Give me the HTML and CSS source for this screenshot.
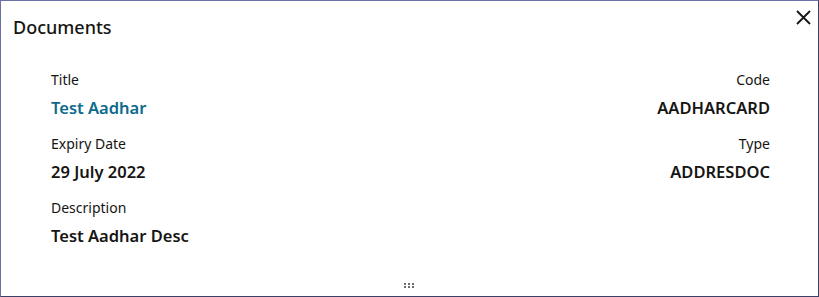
FILE: index.html
```html
<!DOCTYPE html>
<html lang="en">

<head>
    <meta charset="UTF-8">
    <title>Documents</title>
    <link rel="stylesheet" href="styles.css">
</head>

<body>

    <div class="dialog">
        <div class="dialog-header">
            <h2 class="dialog-title">Documents</h2>
            <button class="close-btn" aria-label="Close">
                <svg width="15" height="15" viewBox="0 0 15 15">
                    <path d="M1 1 L14 14 M14 1 L1 14" stroke="#161513" stroke-width="1.8" fill="none" />
                </svg>
            </button>
        </div>

        <div class="dialog-body">
            <div class="col">
                <div class="field">
                    <div class="label">Title</div>
                    <div class="value link">Test Aadhar</div>
                </div>
                <div class="field">
                    <div class="label">Expiry Date</div>
                    <div class="value">29 July 2022</div>
                </div>
                <div class="field">
                    <div class="label">Description</div>
                    <div class="value">Test Aadhar Desc</div>
                </div>
            </div>
            <div class="col col-right">
                <div class="field">
                    <div class="label">Code</div>
                    <div class="value">AADHARCARD</div>
                </div>
                <div class="field">
                    <div class="label">Type</div>
                    <div class="value">ADDRESDOC</div>
                </div>
            </div>
        </div>

        <div class="grip">
            <span></span><span></span><span></span>
            <span></span><span></span><span></span>
        </div>
    </div>

</body>

</html>
```

FILE: styles.css
```css
html,
body {
    margin: 0;
    padding: 0;
    background: #fff;
}

body {
    font-family: "Noto Sans", "Open Sans", sans-serif;
    color: #161513;
}

.dialog {
    position: relative;
    box-sizing: border-box;
    width: 819px;
    height: 297px;
    border: 1px solid #6b73a6;
    border-right-color: #3b4166;
    border-bottom-color: #3b4166;
    background: #fff;
}

.dialog-header {
    display: flex;
    justify-content: space-between;
    align-items: flex-start;
    padding: 14px 3px 0 12px;
    height: 40px;
}

.dialog-title {
    margin: 0;
    font-size: 18px;
    line-height: 24px;
    font-weight: 500;
}

.close-btn {
    margin-top: -9px;
    padding: 4px;
    border: 0;
    background: none;
    line-height: 0;
}

.dialog-body {
    display: flex;
    justify-content: space-between;
    padding: 15px 48px 0 50px;
}

.col-right {
    text-align: right;
}

.field {
    margin-bottom: 16px;
}

.label {
    font-size: 14px;
    line-height: 20px;
    margin-bottom: 8px;
}

.value {
    font-size: 16.5px;
    line-height: 20px;
    font-weight: 600;
}

.link {
    color: #0e6a8c;
}

/* resize handle */
.grip {
    position: absolute;
    left: 403px;
    bottom: 8px;
    display: grid;
    grid-template-columns: repeat(3, 2px);
    gap: 1px 2px;
}

.grip span {
    width: 2px;
    height: 2px;
    background: #6f6c69;
}
```
